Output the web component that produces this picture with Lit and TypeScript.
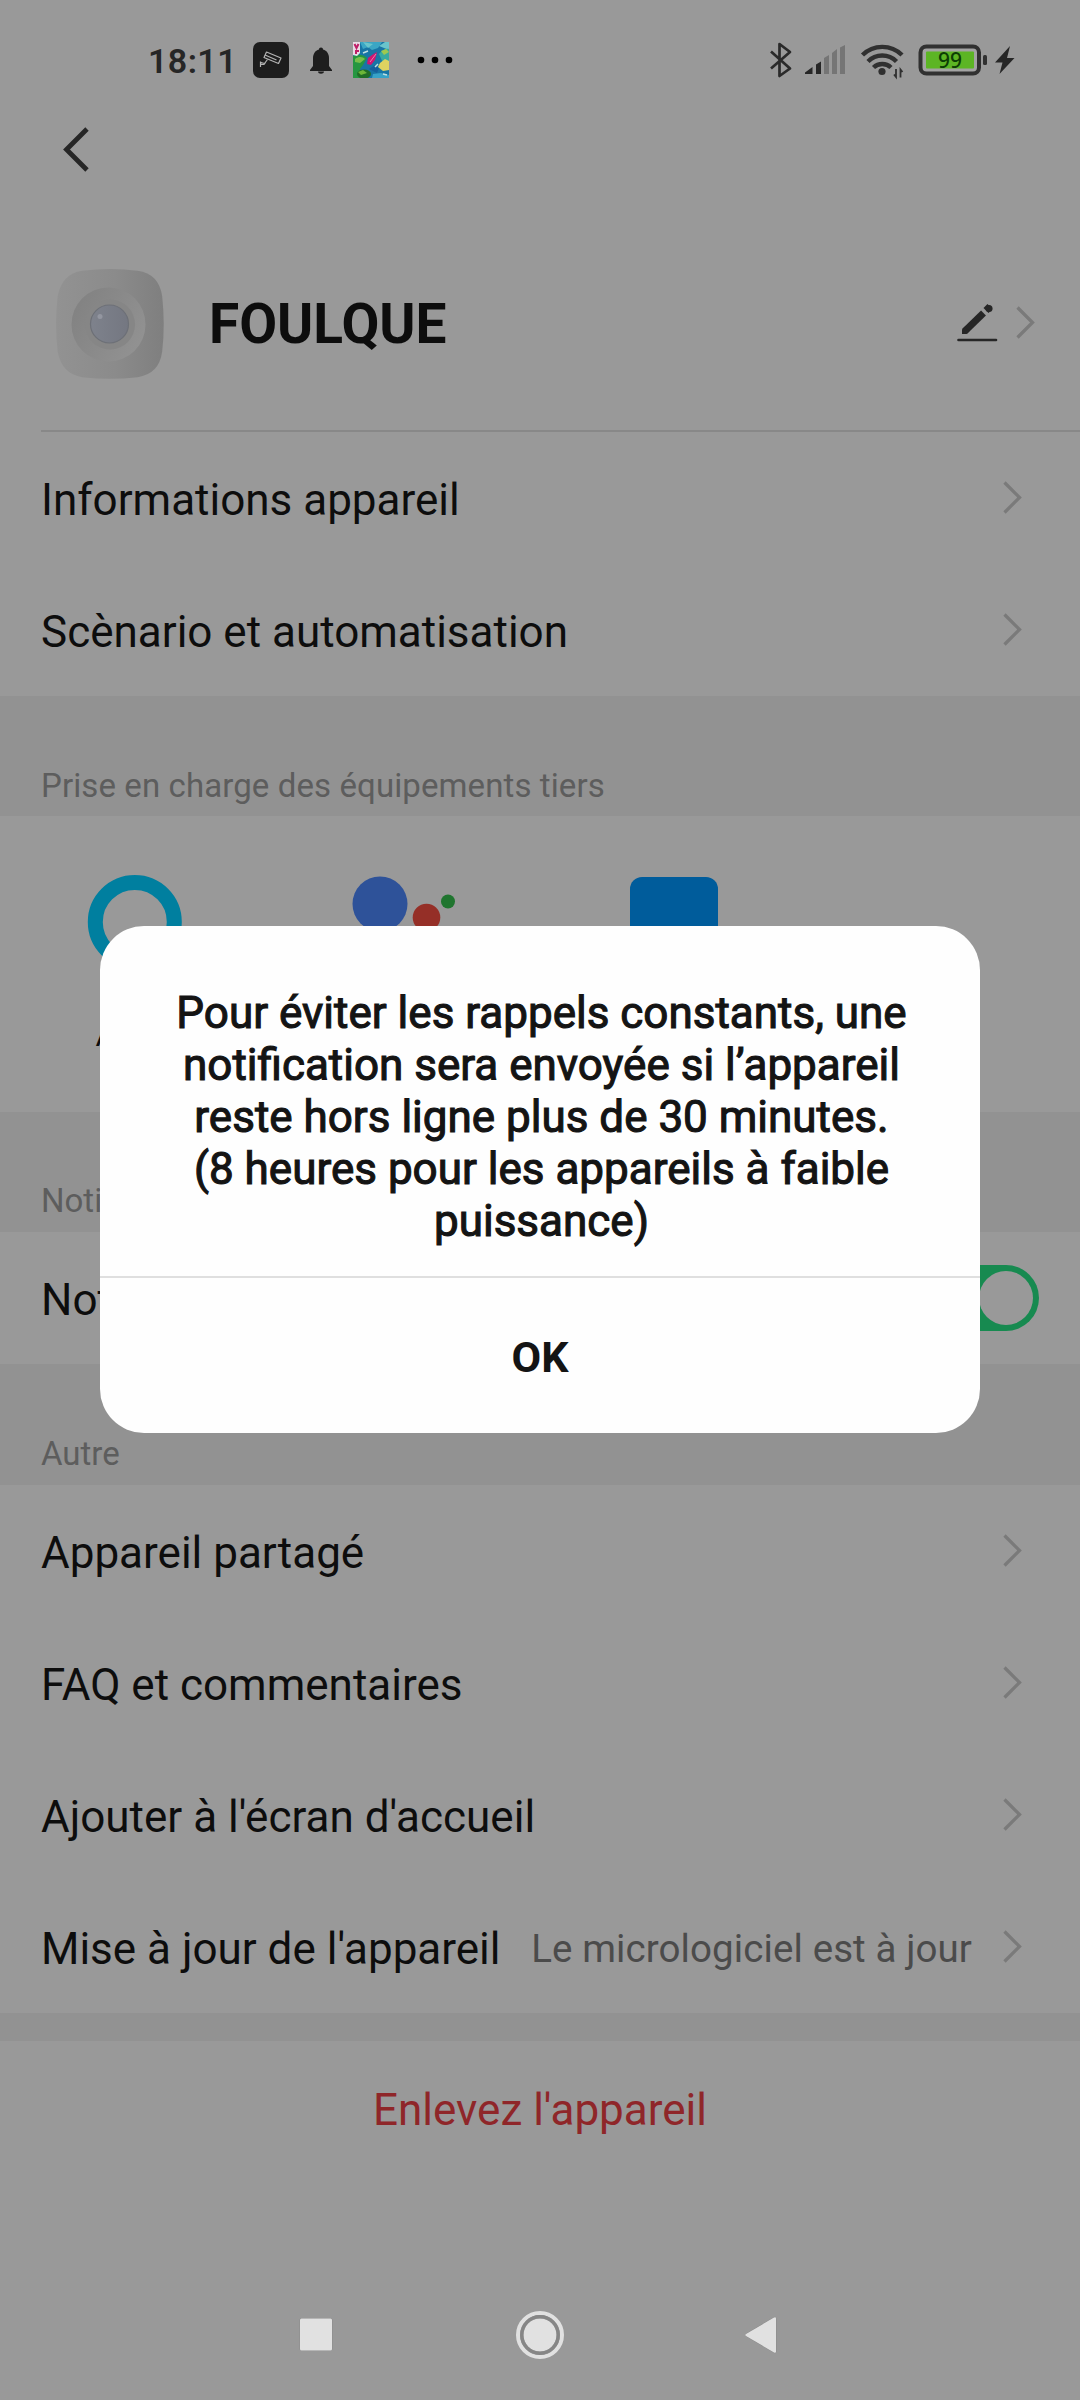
import { LitElement, html, css } from "lit";
import { customElement, property } from "lit/decorators.js";

@customElement("status-bar")
class StatusBar extends LitElement {
  static styles = css`
    :host { display: block; height: 120px; }
    .bar { display: flex; align-items: center; height: 120px; box-sizing: border-box; padding: 0 64px 0 148px; }
    .time { font-size: 34px; line-height: 40px; font-weight: 600; letter-spacing: 0.4px; color: #262626; width: 105px; padding-top: 2px; box-sizing: border-box; }
    .spacer { flex: 1; }
    svg { display: block; flex: none; }
    .level { font: 500 21px "Noto Sans", "Open Sans", sans-serif; }
  `;
  render() {
    return html`<div class="bar">
      <div class="time">18:11</div>
      <svg width="205" height="40" viewBox="253 40 205 40">
        <rect x="253" y="42" width="36" height="36" rx="7" fill="#1d1d1d" />
        <g fill="none" stroke="#b4b4b4" stroke-width="1.200" stroke-linejoin="round">
          <path d="M266.500 52l14.500 6-2.500 5.500-14.500-6z" />
          <path d="M265 55l11.500 5M267.500 59.500l-3 4-3.500-.8M260.500 61.500v5.500M260.500 64.500h3.500l1.500-2" />
        </g>
        <path d="M321 47.500c1.300 0 2 .9 2 1.900 4 1 6 4.600 6 8.600v8l3 4v1h-22v-1l3-4v-8c0-4 2-7.600 6-8.600 0-1 .7-1.900 2-1.900zM318 71.500h6c0 1.500-1.500 2.200-3 2.200s-3-.7-3-2.200z" fill="#1e1e1e" />
        <svg x="353" y="42" width="36" height="36" viewBox="0 0 36 36">
          <rect width="36" height="36" fill="#1875a5" />
          <path d="M7 0h22l-4 6-6 2-4-3-5 2z" fill="#3ba6c4" />
          <path d="M10 0l5 6 5-4zM26 4l6-4h4v8z" fill="#6ac4cb" />
          <path d="M0 14c5-2 10-2 14 2l-4 7-3 4 2 9H0z" fill="#269641" />
          <path d="M2 17c4-3 8-2 10 0l-5 4-5-1z" fill="#79be4b" />
          <path d="M26 12c3-4 7-6 10-5v13l-6 1z" fill="#39aaa0" />
          <path d="M28 9l5-2 3 3-5 3z" fill="#9fc94f" />
          <path d="M0 0h7v11l-3 3-4-1z" fill="#e8dce5" />
          <path d="M1.500 2l2 4 2-4M3 8v4M3 9h3" stroke="#bf1d66" stroke-width="2" fill="none" />
          <path d="M24 10l-2 8-4 5-4-1 1-6 4-3z" fill="#cc1671" />
          <path d="M23 12l-6 8" stroke="#ed7aac" />
          <path d="M16 27l6-4 4 3-2 5z" fill="#165f9b" />
          <path d="M27 21l5-4 4 2v9l-6 1-5-4z" fill="#ded360" />
          <ellipse cx="11" cy="32" rx="7" ry="4.500" fill="#1f6d25" />
          <path d="M5 30l5-2 4 3-6 2z" fill="#6cb637" />
          <path d="M20 32l8-1 8 2v3H19z" fill="#37a2c8" />
          <path d="M10 11l5-2M22 25l3-3M30 32l4 1" stroke="#bee0e2" stroke-width="1.500" />
        </svg>
        <g fill="#000"><circle cx="421" cy="60" r="3.300" /><circle cx="435" cy="60" r="3.300" /><circle cx="449" cy="60" r="3.300" /></g>
      </svg>
      <div class="spacer"></div>
      <svg width="248" height="40" viewBox="768 40 248 40">
        <path d="M771 51.500l19 17-10.500 7.500V44L790 52 771 68.500" fill="none" stroke="#2a2a2a" stroke-width="2.700" stroke-linejoin="round" />
        <path d="M805 74v-1.500l7.500-5.500v7z" fill="#262626" />
        <path d="M816 74V64.500l5-3V74z" fill="#262626" />
        <g fill="#757575"><path d="M824 74V58l5-3v19zM832 74V53l5-4v25zM840 74V47.500l5-2.500v29z" /></g>
        <g fill="none" stroke="#303030" stroke-width="4.400">
          <path d="M862.500 55a28 28 0 0 1 39.500 0" /><path d="M868 61.500a20 20 0 0 1 28.500 0" /><path d="M873.500 67.500a12.500 12.500 0 0 1 17.500 0" />
        </g>
        <circle cx="882" cy="71.500" r="3.600" fill="#303030" />
        <path d="M896 69v8l-2-2.500M900.500 77.500v-8l2 2.500" fill="none" stroke="#303030" stroke-width="1.800" />
        <rect x="920.500" y="46.500" width="58.500" height="27" rx="6" fill="#a3a3a3" stroke="#303030" stroke-width="4" />
        <rect x="926" y="51.500" width="48" height="17" rx="1" fill="#5cb524" />
        <rect x="983" y="55" width="4" height="10" rx="1.500" fill="#303030" />
        <text class="level" x="950" y="68" text-anchor="middle" fill="#0d3d05">99</text>
        <path d="M1010 46l-15 16.500h7.500L999.500 74l15-16h-7.500z" fill="#262626" />
      </svg>
    </div>`;
  }
}

const chevron = html`<svg width="20" height="34" viewBox="0 0 20 34"><path d="M1.500 1.500L16.500 16.500 1.500 31.500" fill="none" stroke="#7a7a7a" stroke-width="3.300" /></svg>`;

@customElement("setting-row")
class SettingRow extends LitElement {
  @property() label = "";
  @property() value = "";
  @property({ type: Boolean }) toggle = false;
  static styles = css`
    :host { display: block; height: 132px; }
    .row { display: flex; align-items: center; height: 132px; box-sizing: border-box; padding: 0 57px 0 41px; color: #0d0d0d; }
    .label { flex: 1; font-size: 44px; line-height: 52px; white-space: nowrap; padding-top: 3px; }
    .value { font-size: 38.5px; line-height: 46px; letter-spacing: 0.1px; color: #4b4b4b; margin-right: 31px; white-space: nowrap; padding-top: 3px; }
    .with-toggle { padding-right: 41px; }
    .track { display: flex; justify-content: flex-end; box-sizing: border-box; width: 116px; height: 66px; padding: 6px; border-radius: 33px; background: #178a50; }
    .knob { width: 54px; height: 54px; border-radius: 50%; background: #999; }
    svg { display: block; flex: none; }
  `;
  render() {
    return html`<div class="row ${this.toggle ? "with-toggle" : ""}">
      <span class="label">${this.label}</span>
      ${this.value ? html`<span class="value">${this.value}</span>` : ""}
      ${this.toggle ? html`<span class="track"><span class="knob"></span></span>` : chevron}
    </div>`;
  }
}

@customElement("alert-dialog")
class AlertDialog extends LitElement {
  static styles = css`
    :host { display: block; }
    .dialog { width: 880px; height: 507px; border-radius: 44px; background: #fefefe; color: #141414; display: flex; flex-direction: column; overflow: hidden; text-align: center; }
    .message { box-sizing: border-box; height: 350px; padding: 61px 0 0 3px; font-size: 44px; line-height: 52px; -webkit-text-stroke: 1.1px #141414; white-space: nowrap; }
    .action { flex: 1; display: flex; align-items: center; justify-content: center; border-top: 2px solid #dfdfdf; font-size: 43px; line-height: 52px; font-weight: 700; padding-top: 3px; }
  `;
  render() {
    return html`<div class="dialog">
      <div class="message">Pour éviter les rappels constants, une<br />notification sera envoyée si l’appareil<br />reste hors ligne plus de 30 minutes.<br />(8 heures pour les appareils à faible<br />puissance)</div>
      <div class="action">OK</div>
    </div>`;
  }
}

@customElement("app-root")
class AppRoot extends LitElement {
  static styles = css`
    :host { display: block; font-family: Roboto, "Liberation Sans", sans-serif; }
    .screen { position: relative; width: 1080px; height: 2400px; background: #999; overflow: hidden; display: flex; flex-direction: column; }
    svg { display: block; flex: none; }
    .toolbar { height: 60px; padding-left: 62px; display: flex; align-items: center; }
    .device { box-sizing: border-box; height: 250px; display: flex; align-items: center; padding: 36px 44px 0 54px; }
    .name { flex: 1; margin-left: 39px; font-size: 55px; line-height: 64px; font-weight: 700; color: #0d0d0d; padding-top: 1px; }
    .pen { margin-right: 18px; }
    .line { height: 2px; margin-left: 41px; background: #888; }
    .section { box-sizing: border-box; background: #929292; color: #5d5d5d; font-size: 33px; line-height: 40px; padding-left: 41px; display: flex; align-items: flex-end; white-space: nowrap; }
    .section-third { height: 120px; padding-bottom: 10px; letter-spacing: 0.1px; }
    .section-note { height: 120px; padding-bottom: 11px; }
    .section-other { height: 121px; padding-bottom: 11px; }
    .services { box-sizing: border-box; height: 296px; display: flex; padding: 57px 0 0 86px; }
    .service { width: 98px; display: flex; flex-direction: column; align-items: flex-start; gap: 46px; font-size: 32px; line-height: 40px; color: #0d0d0d; }
    .service span { align-self: center; }
    .service-assistant { margin-left: 166px; width: 110px; }
    .service-app { margin-left: 170px; }
    .gap { height: 28px; background: #929292; }
    .remove { box-sizing: border-box; height: 136px; display: flex; align-items: center; justify-content: center; font-size: 44px; color: #8f2629; padding-top: 1px; }
    .nav { margin-top: auto; height: 130px; display: flex; align-items: center; justify-content: center; }
    .modal { position: absolute; left: 100px; top: 926px; }
  `;
  render() {
    return html`<div class="screen">
      <status-bar></status-bar>
      <div class="toolbar"><svg width="30" height="48" viewBox="0 0 30 48"><path d="M25 3L4.500 23.500 25 44" fill="none" stroke="#262626" stroke-width="4.800" stroke-linecap="butt" /></svg></div>
      <div class="device">
        <svg width="116" height="116" viewBox="0 -1.500 116 116">
          <defs>
            <linearGradient id="body"><stop offset="0" stop-color="#929292" /><stop offset=".55" stop-color="#8b8b8b" /><stop offset="1" stop-color="#7f7f7f" /></linearGradient>
            <linearGradient id="dish" x2="1" y2=".6"><stop offset="0" stop-color="#808080" /><stop offset="1" stop-color="#919191" /></linearGradient>
            <linearGradient id="lens"><stop offset="0" stop-color="#7e828c" /><stop offset="1" stop-color="#747781" /></linearGradient>
          </defs>
          <path d="M30 5q28-3 54 0 21 3 24 25 3 28 0 54-3 22-24 25-27 3-54 0-20-3-24-25-3-27 0-54 4-22 24-25z" transform="translate(-2.500 -1) scale(1.025)" fill="url(#body)" />
          <circle cx="54.500" cy="58" r="37" fill="url(#dish)" />
          <circle cx="56" cy="58" r="25" fill="#868686" />
          <circle cx="55.500" cy="57.500" r="19" fill="url(#lens)" stroke="#6d7077" stroke-width="1.200" />
          <circle cx="46" cy="50" r="2.500" fill="#9396a0" />
        </svg>
        <div class="name">FOULQUE</div>
        <svg class="pen" width="42" height="38" viewBox="957 304 42 38">
          <path d="M965.500 331.500L984.500 313" stroke="#262626" stroke-width="7" />
          <path d="M963 334v-4.500l3-3 4.500 4.500-3 3z" fill="#262626" />
          <path d="M987 310.500L991 306.500" stroke="#262626" stroke-width="7" />
          <circle cx="990" cy="308.500" r="3.500" fill="#262626" />
          <path d="M959.500 340h37.500" stroke="#262626" stroke-width="2.600" stroke-linecap="round" />
        </svg>
        ${chevron}
      </div>
      <div class="line"></div>
      <setting-row label="Informations appareil"></setting-row>
      <setting-row label="Scènario et automatisation"></setting-row>
      <div class="section section-third">Prise en charge des équipements tiers</div>
      <div class="services">
        <div class="service">
          <svg width="98" height="96" viewBox="0 0 98 96"><circle cx="48.800" cy="49" r="39.500" fill="none" stroke="#007f9f" stroke-width="15" /></svg>
          <span>Alexa</span>
        </div>
        <div class="service service-assistant">
          <svg width="110" height="96" viewBox="350 873 110 96">
            <circle cx="380" cy="904" r="27.500" fill="#2e5299" /><circle cx="426.500" cy="917.500" r="13.800" fill="#952f27" /><circle cx="448" cy="901.500" r="7" fill="#20752f" />
          </svg>
        </div>
        <div class="service service-app">
          <svg width="88" height="96" viewBox="0 0 88 96"><rect x="0" y="4" width="88" height="88" rx="12" fill="#005c9b" /></svg>
        </div>
      </div>
      <div class="section section-note">Notification</div>
      <setting-row label="Notification hors ligne" toggle></setting-row>
      <div class="section section-other">Autre</div>
      <setting-row label="Appareil partagé"></setting-row>
      <setting-row label="FAQ et commentaires"></setting-row>
      <setting-row label="Ajouter à l'écran d'accueil"></setting-row>
      <setting-row label="Mise à jour de l'appareil" value="Le micrologiciel est à jour"></setting-row>
      <div class="gap"></div>
      <div class="remove">Enlevez l'appareil</div>
      <div class="nav">
        <svg width="484" height="52" viewBox="298 2309.500 484 52">
          <g fill="#e1e1e1" stroke="#8a8a8a" stroke-width="1" paint-order="stroke">
            <rect x="300" y="2319" width="32" height="32" rx="1.500" />
            <circle cx="540" cy="2335.500" r="16.500" />
            <path d="M776 2319v33q0 2-2 1l-28-16.500q-1.500-1 0-2l28-16.500q2-1 2 1z" />
          </g>
          <circle cx="540" cy="2335.500" r="22" fill="none" stroke="#e1e1e1" stroke-width="4" />
          <circle cx="540" cy="2335.500" r="18.300" fill="none" stroke="#868686" stroke-width="3.200" />
        </svg>
      </div>
      <alert-dialog class="modal"></alert-dialog>
    </div>`;
  }
}
